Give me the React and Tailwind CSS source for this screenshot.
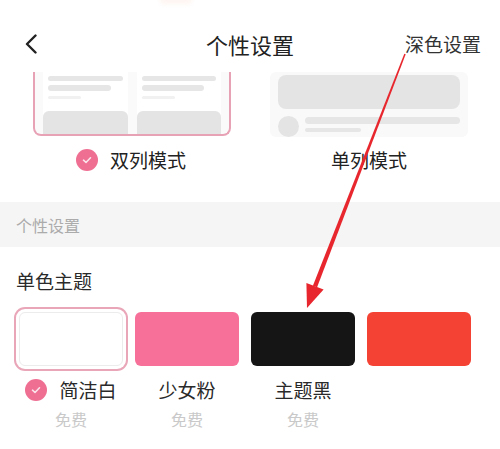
const CheckDot = () => (
  <span className="flex h-[22px] w-[22px] items-center justify-center rounded-full bg-[#ef6f93]">
    <svg width="12" height="12" viewBox="0 0 12 12" fill="none">
      <path d="M2.5 6.2 L5 8.5 L9.5 3.8" stroke="#fbe3ea" strokeWidth="1.6" strokeLinecap="round" strokeLinejoin="round" />
    </svg>
  </span>
)

const themes = [
  { name: '简洁白', color: 'bg-white border border-[#ececec]', checked: true },
  { name: '少女粉', color: 'bg-[#f6709a]' },
  { name: '主题黑', color: 'bg-[#151515]' },
  { name: null, color: 'bg-[#f44334]' },
]

const App = () => {
  return (
    <div className="relative h-[449px] w-[500px] overflow-hidden bg-white font-['Noto_Sans_CJK_SC','Noto_Sans',sans-serif]">
      <div className="absolute left-[160px] top-[-4px] h-[8px] w-[32px] rounded-full bg-[#fde6dc] opacity-40 blur-[2px]" />

      {/* header */}
      <div className="relative flex h-[72px] items-center justify-center pt-[16px]">
        <svg className="absolute left-[24px] top-[34px]" width="14" height="20" viewBox="0 0 14 20" fill="none">
          <path d="M11.5 1.5 L3 10 L11.5 18.5" stroke="#222" strokeWidth="2.4" strokeLinecap="round" strokeLinejoin="round" />
        </svg>
        <h1 className="text-[22px] leading-[30px] text-[#222]">个性设置</h1>
        <span className="absolute left-[405px] top-[30px] text-[19px] leading-[28px] text-[#333]">深色设置</span>
      </div>

      {/* layout preview cards */}
      <div className="flex pl-[33px]">
        <div className="flex h-[64px] w-[198px] gap-[9px] rounded-b-[8px] border-x-2 border-b-2 border-[#e8a2b6] bg-[#fafafa] px-[8px]">
          {[0, 1].map((i) => (
            <div key={i} className="flex flex-1 flex-col bg-white">
              <div className="mx-[5px] mt-[4px] h-[5px] rounded-sm bg-[#e6e6e6]" />
              <div className="ml-[5px] mr-[17px] mt-[4px] h-[6px] rounded-sm bg-[#e6e6e6]" />
              <div className="ml-[5px] mt-[5px] h-[3px] w-[33px] rounded-sm bg-[#f1f1f1]" />
              <div className="mt-auto h-[23px] rounded-t-[6px] bg-[#e4e4e4]" />
            </div>
          ))}
        </div>
        <div className="ml-[39px] flex h-[65px] w-[198px] flex-col overflow-hidden rounded-[6px] bg-[#f9f9f9] px-[8px] pt-[3px]">
          <div className="h-[40px] rounded-[8px] bg-[#e4e4e4]" />
          <div className="mt-[7px] flex gap-[6px]">
            <div className="h-[21px] w-[21px] shrink-0 rounded-full bg-[#e4e4e4]" />
            <div className="flex flex-1 flex-col gap-[4px] pt-[1px]">
              <div className="h-[7px] rounded-sm bg-[#e6e6e6]" />
              <div className="h-[4px] w-[56px] rounded-sm bg-[#e6e6e6]" />
            </div>
          </div>
        </div>
      </div>

      <div className="mt-[12px] flex">
        <div className="flex w-[250px] items-center justify-center gap-[12px] pl-[12px]">
          <CheckDot />
          <span className="text-[19px] leading-[22px] text-[#222]">双列模式</span>
        </div>
        <div className="flex w-[250px] items-center justify-center pr-[12px]">
          <span className="text-[19px] leading-[22px] text-[#222]">单列模式</span>
        </div>
      </div>

      {/* section band */}
      <div className="mt-[31px] flex h-[45px] items-center bg-[#f5f5f5] px-[16px]">
        <span className="text-[16px] text-[#ababab]">个性设置</span>
      </div>

      <div className="mt-[21px] px-[16px] text-[19px] leading-[26px] text-[#2a2a2a]">单色主题</div>

      {/* themes */}
      <div className="mt-[18px] flex gap-[12px] pl-[19px]">
        {themes.map((t, i) => (
          <div key={i} className="flex w-[104px] shrink-0 flex-col items-center">
            <div
              className={`h-[54px] w-[104px] rounded-[6px] ${t.color} ${
                t.checked ? 'ring-2 ring-[#e9a6b9] ring-offset-[3px]' : ''
              }`}
            />
            {t.name && (
              <>
                <div className="mt-[11px] flex items-center gap-[12px]">
                  {t.checked && <CheckDot />}
                  <span className="text-[19px] leading-[26px] text-[#2a2a2a]">{t.name}</span>
                </div>
                <span className="mt-[6px] text-[16px] leading-[20px] text-[#c9c9c9]">免费</span>
              </>
            )}
          </div>
        ))}
      </div>

      {/* annotation arrow */}
      <svg className="pointer-events-none absolute left-0 top-0" width="500" height="449" viewBox="0 0 500 449">
        <polygon points="405.7,54.3 404.3,53.7 312.9,285.7 317.1,287.3" fill="#e7262d" />
        <polygon points="307,308 323.6,289.6 306.4,283" fill="#e7262d" />
      </svg>
    </div>
  )
}

export default App
